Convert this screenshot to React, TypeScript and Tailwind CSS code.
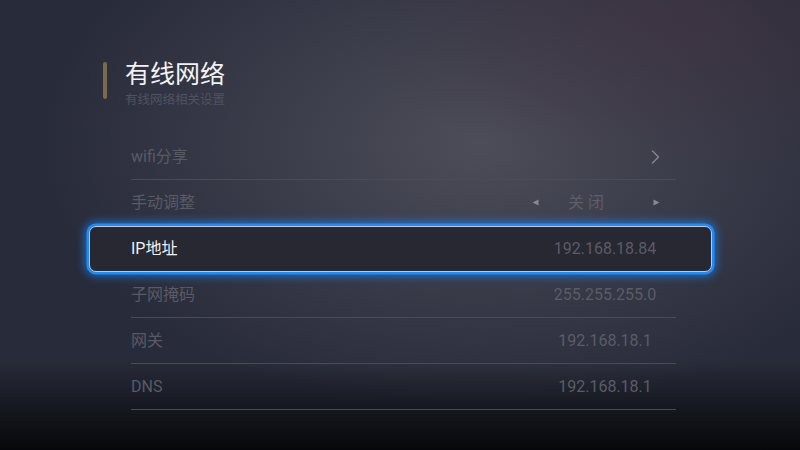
import type { ReactNode } from "react";

type Row = {
  label: string;
  value?: string;
  kind?: "link" | "toggle";
  selected?: boolean;
};

const rows: Row[] = [
  { label: "wifi分享", kind: "link" },
  { label: "手动调整", kind: "toggle", value: "关闭" },
  { label: "IP地址", value: "192.168.18.84", selected: true },
  { label: "子网掩码", value: "255.255.255.0" },
  { label: "网关", value: "192.168.18.1" },
  { label: "DNS", value: "192.168.18.1" },
];

const Chevron = () => (
  <svg width="9" height="14" viewBox="0 0 9 14" fill="none" className="mr-[16px]">
    <path d="M1.5 1 L7.5 7 L1.5 13" stroke="#868893" strokeWidth="1.4" strokeLinecap="round" strokeLinejoin="round" />
  </svg>
);

const Tri = ({ dir }: { dir: "left" | "right" }) => (
  <svg width="7" height="7" viewBox="0 0 7 7">
    {dir === "left" ? <path d="M0.5 3.5 L6.5 0.5 L6.5 6.5 Z" fill="#868893" /> : <path d="M6.5 3.5 L0.5 0.5 L0.5 6.5 Z" fill="#868893" />}
  </svg>
);

const RightSide = ({ row }: { row: Row }): ReactNode => {
  if (row.kind === "link") return <Chevron />;
  if (row.kind === "toggle")
    return (
      <div className="flex items-center mr-[16px]">
        <Tri dir="left" />
        <span className="ml-[29px] mr-[45px] tracking-[4px] text-[#5c5e69]">{row.value}</span>
        <Tri dir="right" />
      </div>
    );
  return <span className="w-[120px] text-center mr-[11px] text-[#5a5c67]">{row.value}</span>;
};

export default function App() {
  return (
    <div
      className="w-[800px] h-[450px] overflow-hidden bg-[linear-gradient(to_bottom,rgba(0,0,0,0)_0%,rgba(0,0,0,0)_80%,rgba(5,6,9,0.97)_100%),radial-gradient(ellipse_40%_35%_at_85%_5%,rgba(68,50,64,0.55)_0%,rgba(68,50,64,0)_100%),radial-gradient(ellipse_55%_60%_at_60%_32%,#4d4d58_0%,#3a3c4a_50%,#282b39_100%)]"
      style={{ fontFamily: 'Roboto, "Noto Sans CJK SC", sans-serif' }}
    >
      <div className="flex pt-[62px] pl-[103px]">
        <div className="w-[4px] h-[37px] rounded-[2px] bg-[#7c6a4b]" />
        <div className="ml-[18px] -mt-[2px]">
          <div className="text-[25px] leading-[30px] text-[#f2f2f4]">有线网络</div>
          <div className="text-[12.5px] leading-[16px] mt-[2px] text-[#4f5261]">有线网络相关设置</div>
        </div>
      </div>

      <div className="ml-[131px] w-[545px] mt-[26px] text-[16px]">
        {rows.map((row) =>
          row.selected ? (
            <div
              key={row.label}
              className="h-[46px] -ml-[42px] -mr-[36px] pl-[41px] pr-[35px] flex items-center justify-between rounded-[7px] border border-[#c3c7d0] bg-[#272831] shadow-[0_0_0_2.5px_#1b8dff,0_0_10px_4px_rgba(25,135,255,0.7)] relative z-10"
            >
              <span className="text-[#f0f0f2]">{row.label}</span>
              <RightSide row={row} />
            </div>
          ) : (
            <div key={row.label} className="h-[46px] flex items-center justify-between border-b border-[#4a4b56]">
              <span className="text-[#585a66]">{row.label}</span>
              <RightSide row={row} />
            </div>
          )
        )}
      </div>
    </div>
  );
}
